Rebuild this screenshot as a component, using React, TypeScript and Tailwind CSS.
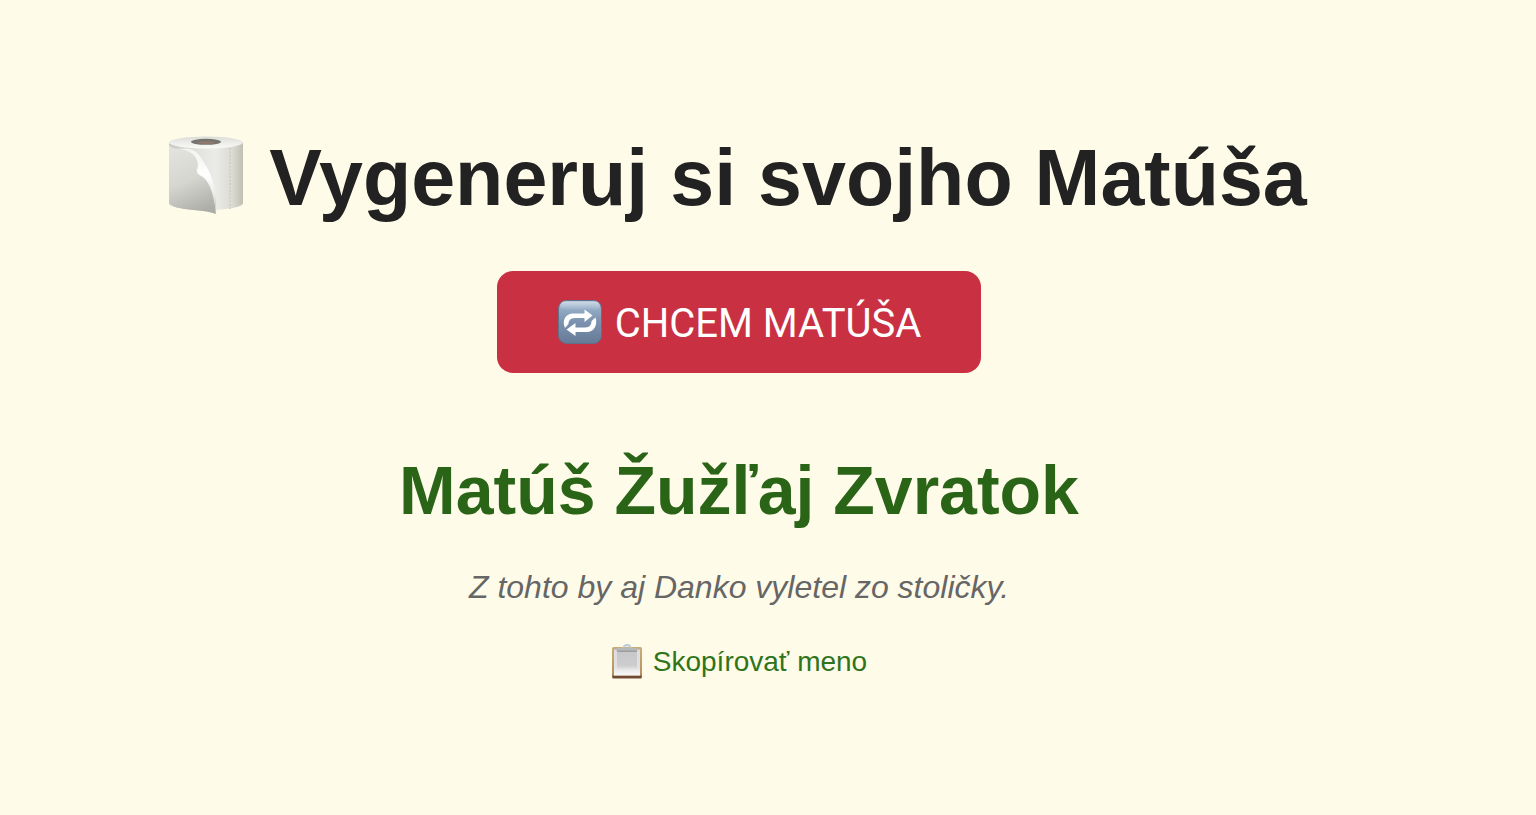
import { useState } from "react";

function ToiletRoll() {
  return (
    <svg viewBox="0 0 78 80" className="mb-2 h-20 w-[78px] shrink-0" aria-hidden="true">
      <defs>
        <linearGradient id="roll-body" x1="0" x2="1" y1="0" y2="0">
          <stop offset="0" stopColor="#c9c9c3" />
          <stop offset="0.3" stopColor="#dededa" />
          <stop offset="0.62" stopColor="#ebebe9" />
          <stop offset="0.85" stopColor="#dcdcd4" />
          <stop offset="1" stopColor="#bfbfb2" />
        </linearGradient>
        <linearGradient id="roll-sheet" x1="0.3" x2="0.6" y1="0" y2="1">
          <stop offset="0" stopColor="#e2e2de" />
          <stop offset="0.5" stopColor="#d6d6d1" />
          <stop offset="1" stopColor="#adada8" />
        </linearGradient>
        <linearGradient id="roll-curl" x1="0" x2="0" y1="0" y2="1">
          <stop offset="0" stopColor="#f2f2f0" />
          <stop offset="0.4" stopColor="#ffffff" />
          <stop offset="0.7" stopColor="#ebebe8" />
          <stop offset="1" stopColor="#b4b4af" />
        </linearGradient>
        <linearGradient id="roll-top" x1="0" x2="0" y1="0" y2="1">
          <stop offset="0" stopColor="#dcdcd7" />
          <stop offset="1" stopColor="#fbfbfa" />
        </linearGradient>
      </defs>
      <path d="M2 8v61c0 4 16 7 37 7s37-3 37-7V8z" fill="url(#roll-body)" />
      <ellipse cx="39" cy="8.500" rx="37" ry="6" fill="url(#roll-top)" />
      <ellipse cx="39" cy="7.800" rx="15" ry="3" fill="#74736f" />
      <ellipse cx="39" cy="8.500" rx="9" ry="1.500" fill="#91796d" />
      <path d="M63 14v61" stroke="#c9c9c0" strokeWidth="1.200" strokeDasharray="2 1.500" />
      <path
        d="M2 11c3 3 6 4 10 4c10 0 15 5 18 12c1 4-2 8 0 11c10 5 17 18 19 42C37 75 7 77 2 69z"
        fill="url(#roll-sheet)"
      />
      <path
        d="M11 15c10-1 17 0 21 6c3 4 6 9 9 14c6 12 9 27 8 45c-1-18-5-28-10-34c-4-5-9-5-9-9c0-2 2-4 1-8c-2-8-8-13-20-14z"
        fill="url(#roll-curl)"
      />
    </svg>
  );
}

function RepeatTile() {
  return (
    <svg viewBox="0 0 46 46" className="mb-1 size-[46px] shrink-0" aria-hidden="true">
      <defs>
        <linearGradient id="tile-fill" x1="0" x2="0" y1="0" y2="1">
          <stop offset="0" stopColor="#a9bdd4" />
          <stop offset="0.2" stopColor="#93aac4" />
          <stop offset="0.5" stopColor="#7c93af" />
          <stop offset="1" stopColor="#667a95" />
        </linearGradient>
        <linearGradient id="tile-gloss" x1="0" x2="0" y1="0" y2="1">
          <stop offset="0" stopColor="#ffffff" stopOpacity="0.45" />
          <stop offset="1" stopColor="#ffffff" stopOpacity="0" />
        </linearGradient>
      </defs>
      <rect x="1.500" y="1.500" width="43" height="43" rx="8" fill="url(#tile-fill)" stroke="#5f7089" />
      <rect x="3" y="2.500" width="40" height="9" rx="4.500" fill="url(#tile-gloss)" />
      <path
        d="M27.500 10.500 35.500 16.500 27.500 23V19H18C13 19 11.500 22 11.500 25L8 29C4.500 21 9 14.500 16 14.500H27.500z"
        fill="#fff"
      />
      <path
        d="M18.500 37 9.500 30.500 18.500 24V28.500H28C33 28.500 34.500 25 34.500 22L38.500 18.500C41 26 37 33 30 33H18.500z"
        fill="#fff"
      />
    </svg>
  );
}

function Clipboard() {
  return (
    <svg viewBox="0 0 32 36" className="h-9 w-8 shrink-0" aria-hidden="true">
      <defs>
        <linearGradient id="board-edge" x1="0" x2="0" y1="0" y2="1">
          <stop offset="0" stopColor="#c9ae7b" />
          <stop offset="0.85" stopColor="#b69361" />
          <stop offset="1" stopColor="#765039" />
        </linearGradient>
        <linearGradient id="board-paper" x1="0" x2="0" y1="0" y2="1">
          <stop offset="0" stopColor="#dcdcdf" />
          <stop offset="0.7" stopColor="#e2e2e3" />
          <stop offset="1" stopColor="#fafafa" />
        </linearGradient>
        <linearGradient id="board-shade" x1="0" x2="0" y1="0" y2="1">
          <stop offset="0" stopColor="#c8c8cb" />
          <stop offset="0.8" stopColor="#cdcdcf" />
          <stop offset="1" stopColor="#e2e2e3" />
        </linearGradient>
      </defs>
      <rect x="1" y="3" width="30" height="31.500" rx="1.500" fill="url(#board-edge)" />
      <path d="M3 5.500h26V31.500H3z" fill="url(#board-paper)" />
      <path d="M6 8h20v17H6z" fill="url(#board-shade)" />
      <path d="M2 32h28V34H2z" fill="#6f4936" />
      <path d="M12.500 4c0-4 7-4 7 0" fill="none" stroke="#b9cadd" strokeWidth="1.800" />
      <path d="M5 4h22v2l-2 1.500H7L5 6z" fill="#b6b9b9" />
      <path d="M6 7.200h20" stroke="#8b8d8a" strokeWidth="1" />
    </svg>
  );
}

const NAME = "Matúš Žužľaj Zvratok";

export default function App() {
  const [name, setName] = useState(NAME);

  return (
    <main className="flex min-h-screen flex-col items-center bg-[#fefbe8] pt-[130px] pr-[58px] pb-20 text-center font-['Liberation_Sans',Arial,sans-serif]">
      <h1 className="flex items-center gap-6 pr-1 text-[79px] leading-[96px] font-bold whitespace-nowrap text-[#222222]">
        <ToiletRoll />
        Vygeneruj si svojho Matúša
      </h1>
      <button
        type="button"
        onClick={() => setName(NAME)}
        className="mt-[45px] flex h-[102px] cursor-pointer items-center gap-3 rounded-2xl bg-[#c93042] px-[60px] pt-1 font-[Roboto,sans-serif] text-[40px] text-white"
      >
        <RepeatTile />
        CHCEM MATÚŠA
      </button>
      <h2 className="mt-[75px] text-[68px] leading-[84px] font-bold text-[#2a6417]">{name}</h2>
      <p className="mt-[35px] text-[32px] leading-10 text-[#666666] italic">Z tohto by aj Danko vyletel zo stoličky.</p>
      <button
        type="button"
        onClick={() => navigator.clipboard?.writeText(name)}
        className="mt-[35px] flex cursor-pointer items-center gap-2.5 text-[28px] leading-10 text-[#2f741b]"
      >
        <Clipboard />
        Skopírovať meno
      </button>
    </main>
  );
}
